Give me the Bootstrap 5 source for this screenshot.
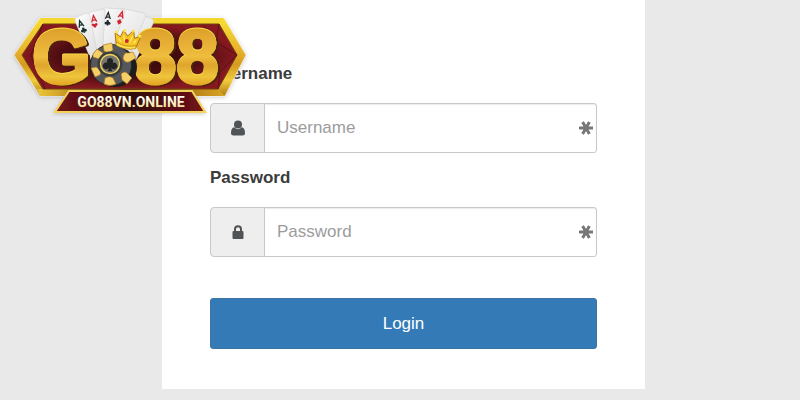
<!DOCTYPE html>
<html lang="en">
<head>
<meta charset="utf-8">
<meta name="viewport" content="width=device-width, initial-scale=1">
<title>Login</title>
<link href="https://cdn.jsdelivr.net/npm/bootstrap@5.3.0/dist/css/bootstrap.min.css" rel="stylesheet">
<style>
  body { background: #e9e9e9; color: #3b3b3b; font-family: "Liberation Sans", Arial, sans-serif; font-size: 17px; line-height: 24px; }
  .page-wrap { padding-left: 7px; }
  .login-panel { max-width: 483px; padding: 62px 48px 40px; }
  .login-panel label { margin-bottom: 17px; }
  .field { --bs-border-radius: 3px; margin-bottom: 13px; }
  .field .input-group-text { width: 55px; background: #eee; border-color: #c8c8c8; color: #505356; border-radius: 4px; }
  .field .form-control { height: 50px; font-size: 17px; padding: 6px 28px 6px 12px; border-color: #c8c8c8; color: #555; box-shadow: inset 0 1px 1px rgba(0,0,0,.08); }
  .field .form-control::placeholder { color: #9c9c9c; opacity: 1; }
  .required-mark { right: 4px; color: #777; z-index: 6; }
  .btn-login { --bs-btn-color: #fff; --bs-btn-bg: #337ab7; --bs-btn-border-color: #3a74a5; --bs-btn-hover-color: #fff; --bs-btn-hover-bg: #286090; height: 51px; margin-top: 28px; font-size: 17px; border-radius: 3px; }
  .brand { width: 260px; z-index: 10; }
</style>
</head>
<body>
<a href="#" class="brand position-absolute top-0 start-0" aria-label="GO88">
<svg class="d-block w-100" viewBox="0 0 260 130">
  <defs>
    <linearGradient id="rim" x1="0" y1="0" x2="0" y2="1"><stop offset="0" stop-color="#f7df35"/><stop offset=".4" stop-color="#e9b52c"/><stop offset=".6" stop-color="#d69a20"/><stop offset=".8" stop-color="#f1cb3c"/><stop offset="1" stop-color="#b17a12"/></linearGradient>
    <linearGradient id="bottomRim" x1="0" y1="0" x2="1" y2="0"><stop offset="0" stop-color="#edc83a"/><stop offset=".25" stop-color="#b57c16"/><stop offset=".5" stop-color="#4b2508"/><stop offset=".8" stop-color="#b47b16"/><stop offset="1" stop-color="#d9a525"/></linearGradient>
    <radialGradient id="velvet"><stop offset="0" stop-color="#2c0808"/><stop offset=".65" stop-color="#4d0d12"/><stop offset="1" stop-color="#86191f"/></radialGradient>
    <linearGradient id="gold" gradientUnits="userSpaceOnUse" x1="0" y1="28" x2="0" y2="85"><stop offset="0" stop-color="#dda02a"/><stop offset=".25" stop-color="#e6ae35"/><stop offset=".5" stop-color="#efbd3d"/><stop offset=".65" stop-color="#dfa52c"/><stop offset=".85" stop-color="#efc43c"/><stop offset="1" stop-color="#e2a524"/></linearGradient>
    <linearGradient id="ribbon" x1="0" y1="0" x2="1" y2="0"><stop offset="0" stop-color="#741419"/><stop offset=".5" stop-color="#2e0709"/><stop offset="1" stop-color="#741419"/></linearGradient>
    <linearGradient id="ribbonText" x1="0" y1="0" x2="0" y2="1"><stop offset=".3" stop-color="#fffef2"/><stop offset="1" stop-color="#f4d77c"/></linearGradient>
    <linearGradient id="paper" x1="0" y1="0" x2="1" y2="1"><stop offset="0" stop-color="#fff"/><stop offset="1" stop-color="#dcdcdc"/></linearGradient>
    <filter id="halo" x="-10%" y="-20%" width="120%" height="140%"><feDropShadow dx="0" dy="1" stdDeviation="2" flood-color="#777" flood-opacity=".4"/></filter>
    <filter id="bevel" x="-5%" y="-10%" width="110%" height="120%"><feDropShadow dx="0" dy="-1" stdDeviation=".2" flood-color="#f8df45"/><feDropShadow dx="2" dy="1" stdDeviation=".6" flood-color="#4b2408"/></filter>
    <path id="club" d="M0-5a2.600 2.600 0 0 1 2.200 4A2.800 2.800 0 1 1 .8 3L2 6H-2L-.8 3A2.800 2.800 0 1 1-2.200-1 2.600 2.600 0 0 1 0-5Z"/>
  </defs>
  <g filter="url(#halo)">
    <path d="M40 18H224L246 55 225 96H40L14 55Z" fill="url(#rim)" stroke="#fff" stroke-opacity=".5"/>
  </g>
  <path d="M37 89H218L225 96H40Z" fill="url(#bottomRim)"/>
  <path d="M40 18H224L219 23H43Z" fill="#f5d52f"/>
  <path d="M43 24H219L237 55 218 89H43L22 55Z" fill="url(#velvet)" stroke="#6f400b"/>
  <path d="M43 24 31 55 45 89M219 24l-3 18 21 13-17 17-2 17M216 42l-12-16M220 72l-16 15" fill="none" stroke="#5a0f15" stroke-width="1"/>

  <!-- fan of aces -->
  <g stroke="#c8c8c8" stroke-width=".5" fill="url(#paper)">
    <path d="M118 10 151 18Q155 20 153 24L134 64 102 60Z"/>
    <path d="M115 11Q116 8 119 8L144 13Q147 14 145 18L126 62 102 60Z"/>
    <path d="M101 11Q102 8 105 8L123 9Q126 10 124 14L108 62 94 58Z"/>
    <path d="M88 15Q88 13 91 12L103 9Q106 9 105 12L102 60 92 60Z"/>
    <path d="M75 21Q74 19 77 17L86 13Q89 13 90 16L98 56 91 60Z"/>
  </g>
  <g fill="none" stroke-width="1.300">
    <g transform="translate(81 25) rotate(-18)" stroke="#17332b"><path d="M-2.500 2 0-4.500 2.500 2M-1.500 0H1.500"/><use href="#club" transform="translate(1 5.500) scale(.5)" fill="#17332b" stroke="none"/></g>
    <g transform="translate(94 20) rotate(-8)" stroke="#d22533"><path d="M-2.500 2 0-4.500 2.500 2M-1.500 0H1.500"/><path d="M0 8-3 5Q-3 2 0 4 3 2 3 5Z" fill="#d22533" stroke="none"/></g>
    <g transform="translate(108 17) rotate(4)" stroke="#222a2d"><path d="M-2.500 2 0-4.500 2.500 2M-1.500 0H1.500"/><use href="#club" transform="translate(0 5.500) scale(.5)" fill="#222a2d" stroke="none"/></g>
    <g transform="translate(121 16) rotate(16)" stroke="#d22533"><path d="M-2.500 2 0-4.500 2.500 2M-1.500 0H1.500"/><path d="M0 3 2.500 6 0 9-2.500 6Z" fill="#d22533" stroke="none"/></g>
  </g>

  <!-- wordmark: the chip stands for the letter O -->
  <g font-family="Liberation Sans, Arial, sans-serif" font-weight="700" font-size="76" stroke-linejoin="round" fill="url(#gold)" stroke="url(#gold)" stroke-width="3" filter="url(#bevel)">
    <text x="32" y="83">G</text><text x="134" y="83">88</text>
  </g>

  <ellipse cx="115" cy="67" rx="22" ry="20" fill="#1d1d1d"/>
  <circle cx="111" cy="65" r="20.500" fill="#55585a" stroke="#272828"/>
  <g fill="#f4cf68" stroke="#a46b17" stroke-width=".6">
    <path d="M103 45l9-2 1 7q-4 4-9 1Z"/>
    <path d="M93 54l4-5 6 4q1 6-4 6l-6-2Z"/>
    <path d="M91 68l5-1q6 3 4 8l-5 2Z"/>
    <path d="M104 84l1-6q5-3 8 0l3 6q-6 3-12 0Z"/>
    <path d="M121 74q4-4 7 0l4 4-5 6-5-4Z"/>
    <path d="M123 58q1-6 5-5l5-1 3 6-7 4q-5 1-6-4Z"/>
  </g>
  <circle cx="110" cy="64" r="12.500" fill="#3a3d3d"/>
  <circle cx="110" cy="64" r="9.500" fill="#77776f" stroke="#f4d25a" stroke-width="1.300"/>
  <use href="#club" transform="translate(110 64) scale(1.200)" fill="#222424"/>

  <g transform="translate(127 40) rotate(10)">
    <path d="M-10 6-13-5-7-2-5-9 0-4 5-11 7-3 13-6 10 6Q0 10-10 6Z" fill="#f5c524" stroke="#9f620b" stroke-width=".8"/>
    <path d="M-10 4Q0 8 10 4V7Q0 11-10 7Z" fill="#ffe14a" stroke="#ae6b0b" stroke-width=".6"/>
    <path d="M-4-4-2 2M5-5 3 2M-8 0-6 3M9-1 7 2" stroke="#fff17a"/>
    <circle cx="0" cy="1" r="2" fill="#cb2532"/>
    <g fill="#ffe84a"><circle cx="-12" cy="-6" r="1.500"/><circle cx="-4" cy="-9" r="1.500"/><circle cx="5" cy="-10" r="1.500"/><circle cx="12" cy="-6" r="1.500"/></g>
  </g>

  <path d="M69 91H192L205 112H55Z" fill="url(#ribbon)" stroke="#f4d35a" stroke-width="2" filter="url(#halo)"/>
  <text x="131" y="107" text-anchor="middle" font-family="Roboto, sans-serif" font-weight="700" font-size="14" fill="url(#ribbonText)">GO88VN.ONLINE</text>
</svg>
</a>

<main class="page-wrap">
  <form class="login-panel bg-white mx-auto">
    <label for="username" class="fw-bold d-block">Username</label>
    <div class="field input-group">
      <span class="input-group-text justify-content-center">
        <svg width="14" height="16" viewBox="0 0 14 16" fill="currentColor" aria-hidden="true"><circle cx="7" cy="4.500" r="4"/><path d="M3.300 7.300Q7 11 10.700 7.300 14 8 14 13 14 15.500 11.500 15.500H2.500Q0 15.500 0 13 0 8 3.300 7.300Z"/></svg>
      </span>
      <input id="username" type="text" class="form-control rounded-end" placeholder="Username" required>
      <svg class="required-mark position-absolute top-50 translate-middle-y" width="14" height="14" viewBox="0 0 14 14" fill="none" stroke="currentColor" stroke-width="3" aria-hidden="true"><path d="M0 7H14M3.600 1 10.400 13M10.400 1 3.600 13"/></svg>
    </div>
    <label for="password" class="fw-bold d-block">Password</label>
    <div class="field input-group">
      <span class="input-group-text justify-content-center">
        <svg width="12" height="14" viewBox="0 0 12 14" aria-hidden="true"><rect x=".5" y="6" width="11" height="8" rx="1" fill="currentColor"/><path d="M3 7V4.300a3 3 0 0 1 6 0V7" fill="none" stroke="currentColor" stroke-width="2"/></svg>
      </span>
      <input id="password" type="password" class="form-control rounded-end" placeholder="Password" required>
      <svg class="required-mark position-absolute top-50 translate-middle-y" width="14" height="14" viewBox="0 0 14 14" fill="none" stroke="currentColor" stroke-width="3" aria-hidden="true"><path d="M0 7H14M3.600 1 10.400 13M10.400 1 3.600 13"/></svg>
    </div>
    <button type="submit" class="btn btn-login w-100">Login</button>
  </form>
</main>
<script src="https://cdn.jsdelivr.net/npm/bootstrap@5.3.0/dist/js/bootstrap.bundle.min.js"></script>
</body>
</html>
